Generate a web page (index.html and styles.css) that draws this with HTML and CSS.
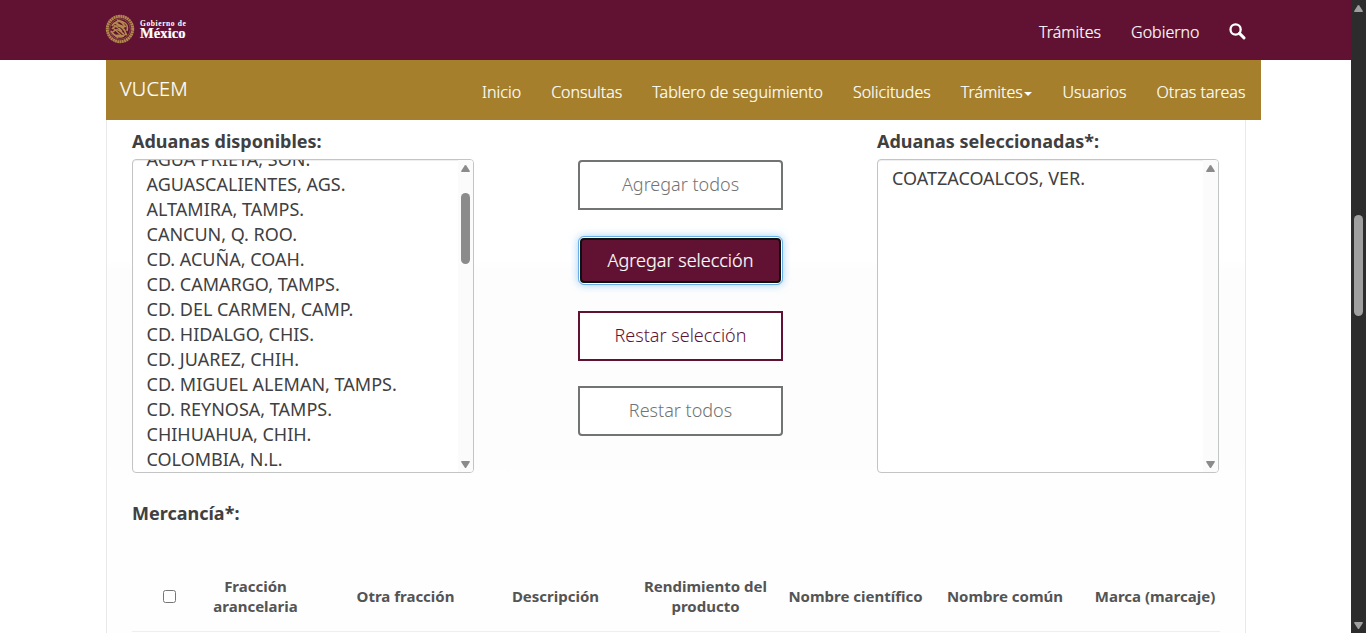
FILE: index.html
```html
<!DOCTYPE html>
<html lang="es">
<head>
<meta charset="utf-8">
<title>VUCEM</title>
<link rel="stylesheet" href="styles.css">
</head>
<body>
<div class="page">
  <header class="gob">
    <div class="brand">
      <svg class="seal" viewBox="0 0 30 30" width="30" height="30" fill="none" stroke="#b3894f">
        <circle cx="15" cy="15" r="12.7" stroke-width="3" stroke-dasharray="1.9 .4"/>
        <circle cx="15" cy="15" r="10.3" stroke-width=".5"/>
        <path stroke-width="1.7" d="M7 12c2-4 7-6 11-4 4 1 5 5 4 9M7 15c3-4 8-4 11-1s2 6 4 7M8 18c2-3 6-3 8 0M10 9c3 3 7 1 9 5M12 6c3 1 7 4 8 7M6 17c3 5 8 7 13 5M10 22c4-2 7 2 11-2M14 14c2 2 2 5 5 6"/>
        <path stroke-width="1.1" d="M9 11l8 6M11 8l9 9M8 14l9 8M14 6l7 7M7 19l6 5"/>
      </svg>
      <div class="wordmark"><span class="small">Gobierno de</span><span class="big">México</span></div>
    </div>
    <nav class="gobnav">
      <a>Trámites</a><a>Gobierno</a>
      <svg class="search" viewBox="0 0 17 17" width="17" height="17" fill="none" stroke="#fff"><circle cx="6.6" cy="6.5" r="5.1" stroke-width="2.3"/><path d="M10.5 10.4l4.5 4.5" stroke-width="2.9" stroke-linecap="round"/></svg>
    </nav>
  </header>
  <div class="subbar">
    <a class="title">VUCEM</a>
    <nav class="menu"><a>Inicio</a><a>Consultas</a><a>Tablero de seguimiento</a><a>Solicitudes</a><a>Trámites<i class="caret"></i></a><a>Usuarios</a><a>Otras tareas</a></nav>
  </div>
  <main class="content">
    <section class="picker">
      <div class="col">
        <label class="label">Aduanas disponibles:</label>
        <div class="list">
          <ul class="options scrolled"><li>AGUA PRIETA, SON.</li><li>AGUASCALIENTES, AGS.</li><li>ALTAMIRA, TAMPS.</li><li>CANCUN, Q. ROO.</li><li>CD. ACUÑA, COAH.</li><li>CD. CAMARGO, TAMPS.</li><li>CD. DEL CARMEN, CAMP.</li><li>CD. HIDALGO, CHIS.</li><li>CD. JUAREZ, CHIH.</li><li>CD. MIGUEL ALEMAN, TAMPS.</li><li>CD. REYNOSA, TAMPS.</li><li>CHIHUAHUA, CHIH.</li><li>COLOMBIA, N.L.</li></ul>
          <div class="track"><svg width="9" height="7" viewBox="0 0 9 7"><path d="M.6 7L0 6.2 3.7.6Q4.5-.4 5.3.6L9 6.2 8.4 7z"/></svg><div class="thumb"></div><svg class="down" width="9" height="7" viewBox="0 0 9 7"><path d="M.6 0L0 .8 3.7 6.4Q4.5 7.4 5.3 6.4L9 .8 8.4 0z"/></svg></div>
        </div>
      </div>
      <div class="actions">
        <button class="btn off top">Agregar todos</button>
        <button class="btn focus">Agregar selección</button>
        <button class="btn on">Restar selección</button>
        <button class="btn off bottom">Restar todos</button>
      </div>
      <div class="col">
        <label class="label">Aduanas seleccionadas*:</label>
        <div class="list">
          <ul class="options"><li>COATZACOALCOS, VER.</li></ul>
          <div class="track"><svg width="9" height="7" viewBox="0 0 9 7"><path d="M.6 7L0 6.2 3.7.6Q4.5-.4 5.3.6L9 6.2 8.4 7z"/></svg><svg class="down" width="9" height="7" viewBox="0 0 9 7"><path d="M.6 0L0 .8 3.7 6.4Q4.5 7.4 5.3 6.4L9 .8 8.4 0z"/></svg></div>
        </div>
      </div>
    </section>
    <div class="label goods">Mercancía*:</div>
    <div class="thead">
      <div><input type="checkbox" class="check"></div><div>Fracción<br>arancelaria</div><div>Otra fracción</div><div>Descripción</div><div>Rendimiento del<br>producto</div><div>Nombre científico</div><div>Nombre común</div><div>Marca (marcaje)</div>
    </div>
  </main>
</div>
<aside class="scrollbar"><svg width="9" height="7" viewBox="0 0 9 7"><path d="M.6 7L0 6.2 3.7.6Q4.5-.4 5.3.6L9 6.2 8.4 7z"/></svg><div class="handle"></div><svg class="down" width="9" height="7" viewBox="0 0 9 7"><path d="M.6 0L0 .8 3.7 6.4Q4.5 7.4 5.3 6.4L9 .8 8.4 0z"/></svg></aside>
</body>
</html>
```
FILE: styles.css
```css
* { box-sizing: border-box; }
body { margin: 0; width: 1366px; height: 633px; overflow: hidden; display: flex; background: #fff; color: #404041; font: 18px/25px "Noto Sans", sans-serif; }
.page { width: 1351px; height: 633px; overflow: hidden; display: flex; flex-direction: column; }
.gob { height: 60px; flex: none; background: #611232; padding: 0 105px; display: flex; justify-content: space-between; }
.brand { display: flex; padding-top: 14px; gap: 5px; height: 60px; }
.seal { display: block; }
.wordmark { display: flex; flex-direction: column; color: #fff; font-family: "Liberation Serif", serif; font-weight: bold; white-space: nowrap; padding-top: 6px; }
.small { font-size: 7.5px; line-height: 8px; letter-spacing: .6px; }
.big { font-size: 14.5px; line-height: 10px; -webkit-text-stroke: .2px #fff; letter-spacing: .1px; }
.gobnav { display: flex; align-items: flex-start; gap: 30px; color: #fff; font-size: 16px; font-weight: 300; line-height: 24px; padding-top: 20px; -webkit-text-stroke: .2px #fff; }
.search { margin: 3px 0 0 -.5px; }
.subbar { width: 1155px; height: 60px; flex: none; margin-left: 106px; background: #a57f2c; color: #fff; display: flex; justify-content: space-between; padding: 0 15.6px 0 14px; -webkit-text-stroke: .2px #fff; }
.title { font-size: 20px; font-weight: 300; line-height: 57px; letter-spacing: .15px; }
.menu { display: flex; gap: 30px; font-size: 16px; font-weight: 300; line-height: 64px; white-space: nowrap; }
.caret { display: inline-block; vertical-align: 2px; border: 4px solid transparent; border-top-color: #fff; border-bottom: 0; margin-left: 1.5px; }
.content { width: 1140px; height: 513px; margin-left: 106px; border: 1px solid #e9e9e9; border-width: 0 1px; padding: 9px 26px 0 25px; background: linear-gradient(#fff 0, #fff 140px, #fdfdfd 150px, #fdfdfd 345px, #fefefe 355px); }
.picker { display: flex; justify-content: space-between; }
.col { width: 342px; }
.label { display: block; font-weight: 700; line-height: 25px; }
.list { margin-top: 5px; height: 314px; border: 1px solid #c3c4c4; border-radius: 4px; background: #fff; display: flex; overflow: hidden; box-shadow: inset 0 1px 1px #eee; }
.options { list-style: none; margin: 0; padding: 6px 0 0 14px; flex: 1; white-space: nowrap; }
.scrolled { margin-top: -19px; padding-left: 13.5px; }
.track { width: 15px; background: #fbfbfb; display: flex; flex-direction: column; align-items: center; padding: 5px 0 4px; }
svg path { fill: #8b8b8b; }
.seal path, .search path { fill: none; }
.thumb { width: 9px; height: 71px; border-radius: 5px; background: #8b8b8b; margin-top: 21px; }
.down { margin-top: auto; }
.actions { width: 205px; margin-left: 9px; padding-top: 31px; display: flex; flex-direction: column; gap: 25px; }
.btn { width: 205px; height: 50px; padding: 0 0 2px 1px; border: 2px solid #727373; background: #fff; color: #727373; font: 300 18px/24px "Noto Sans", sans-serif; }
.top { border-radius: 4px 4px 0 0; }
.bottom { border-radius: 0 0 4px 4px; }
.focus { width: 201px; height: 45px; margin: 3px 2px; border-color: #101010; border-radius: 4px; background: #611232; color: #fff; box-shadow: 0 0 0 1px #fff, 0 0 8px 2px #66afe999; outline: 1px solid #66afe9; outline-offset: 1px; -webkit-text-stroke: .2px #fff; }
.on { border-color: #611232; color: #611232; }
.goods { margin-top: 28px; }
.thead { margin-top: 34px; height: 72px; width: 1088px; display: grid; grid-template-columns: 75px 97px 203px 97px 203px 97px 202px 98px; align-items: center; justify-items: center; text-align: center; font-size: 15px; font-weight: 700; line-height: 20px; color: #545454; border-bottom: 1px solid #eee; white-space: nowrap; }
.check { display: block; width: 13px; height: 13px; margin: 1px 0 0; }
.scrollbar { width: 15px; height: 633px; background: #2c2c2c; display: flex; flex-direction: column; align-items: center; padding: 5px 0 4px; }
.scrollbar path { fill: #9f9f9f; }
.handle { width: 9px; height: 101px; border-radius: 5px; margin-top: 203px; background: #9f9f9f; }
```
